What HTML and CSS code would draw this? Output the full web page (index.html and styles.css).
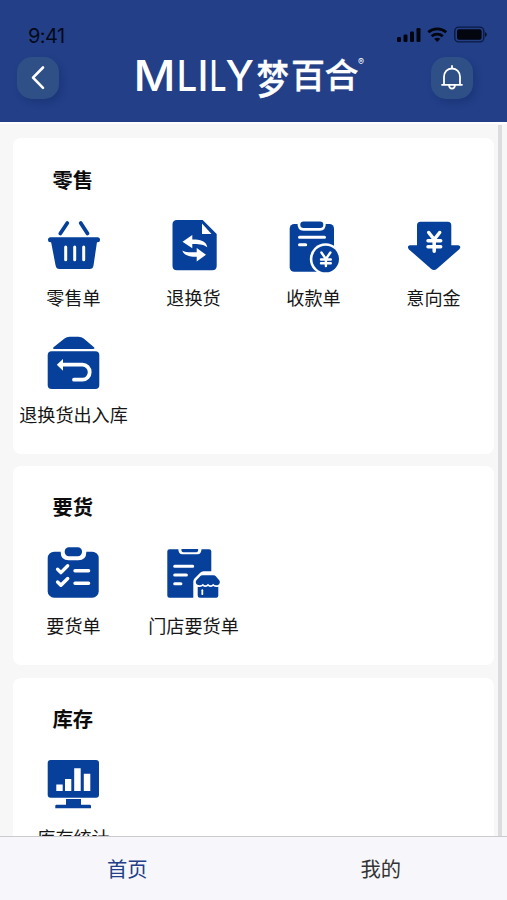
FILE: index.html
```html
<!DOCTYPE html>
<html lang="zh-CN">
<head>
<meta charset="utf-8">
<meta name="viewport" content="width=device-width, initial-scale=1">
<title>MLILY 梦百合</title>
<link rel="stylesheet" href="styles.css">
</head>
<body>
<div class="app">
  <header class="header">
    <div class="status">
      <span class="time">9:41</span>
      <svg class="status-icons" width="92" height="18" viewBox="0 0 92 18">
        <rect x="0" y="11" width="4" height="5" rx="1.200"/>
        <rect x="6.500" y="8.500" width="4" height="7.500" rx="1.200"/>
        <rect x="13" y="5.500" width="4" height="10.500" rx="1.200"/>
        <rect x="19.500" y="2" width="4" height="14" rx="1.200"/>
        <g class="wifi"><path d="M31.300 6.200a13.500 13.500 0 0 1 17.900 0"/><path d="M34.700 10.200a8.300 8.300 0 0 1 11.100 0"/></g>
        <path d="M37.100 12.800q3.200-2.200 6.300 0L40.250 16z"/>
        <rect class="battery" x="57.800" y="1.100" width="29" height="14.800" rx="4"/>
        <rect x="60" y="3.300" width="24.600" height="10.400" rx="2"/>
        <path d="M88.200 5.900q3 2.500 0 5.200z"/>
      </svg>
    </div>
    <div class="brand-row">
      <button class="round-btn" aria-label="返回">
        <svg width="42" height="42" viewBox="0 0 42 42"><path class="chevron" d="M26 10.500 16 20.700l10 10.200"/></svg>
      </button>
      <svg class="logo" width="236" height="60" viewBox="0 0 236 60">
        <g class="latin">
          <text x="6.500" y="42.500" textLength="42" lengthAdjust="spacingAndGlyphs">M</text>
          <text x="49.800" y="42.500" textLength="20.500" lengthAdjust="spacingAndGlyphs">L</text>
          <text x="70.500" y="42.500" textLength="11" lengthAdjust="spacingAndGlyphs">I</text>
          <text x="82.500" y="42.500" textLength="17" lengthAdjust="spacingAndGlyphs">L</text>
          <text x="98.500" y="42.500" textLength="28.500" lengthAdjust="spacingAndGlyphs">Y</text>
        </g>
        <g class="hanzi">
          <text transform="translate(129.500 45.500) scale(.95 1.180)">梦</text>
          <text x="164" y="40">百</text>
          <text x="197.500" y="40">合</text>
        </g>
        <text class="reg" x="231" y="17">®</text>
      </svg>
      <button class="round-btn" aria-label="通知">
        <svg width="42" height="42" viewBox="0 0 42 42"><path class="bell" d="M21 9v2.200M13 27.500v-7.700c0-5 3.300-8.300 8-8.300s8 3.300 8 8.300v7.700M11 27.800h20M18 28c.3 4.800 5.700 4.800 6 0"/></svg>
      </button>
    </div>
  </header>

  <main class="content">
    <div class="cards">
      <section class="card">
        <h2>零售</h2>
        <div class="grid">
          <div class="item">
            <svg class="icon" viewBox="0 0 60 56">
              <path class="ln" stroke-width="3.800" d="M24.300 5 17.300 15.500M37.700 5l6.800 10.500"/>
              <rect x="5" y="19.300" width="52" height="5" rx="2.500"/>
              <path d="M7.700 22h46.600L50.500 47.500Q50 51 46.500 51H16.500Q13.200 51 12.600 47.500z"/>
              <path class="wl" stroke-width="3" d="M22.700 29v12.700M31.700 29v12.700M40.700 29v12.700"/>
            </svg>
            <span>零售单</span>
          </div>
          <div class="item">
            <svg class="icon" viewBox="0 0 60 56">
              <path d="M14 2H39.700l14 14v31.800q0 4.500-4.500 4.500H14Q9.500 52.300 9.500 47.800V6.500Q9.500 2 14 2z"/>
              <path class="w" d="M39 5.500V16h9.500zM19.500 23.700l9.800-6.700v4.500c8 .2 13.800 1.200 15 7.700-4.500-3.200-9.500-3.200-15-3.200v4.300zM43 36.700l-9.300-6.700v4.200c-5 0-10 .8-14.400-1.700 1.500 5 7 6.300 14.400 6.300v4.700z"/>
            </svg>
            <span>退换货</span>
          </div>
          <div class="item">
            <svg class="icon" viewBox="0 0 60 56">
              <rect x="6.700" y="6" width="44.300" height="47.700" rx="4.500"/>
              <path class="w" d="M14.500 5h28.300q.3 7.700-6 7.700H20.500q-6.300 0-6-7.700z"/>
              <rect x="17.300" y="3.500" width="23" height="6.500" rx="3.200"/>
              <path class="wl" stroke-width="3" d="M16.500 19.300h25M16.500 26.700h6.200"/>
              <circle class="w" cx="42.500" cy="41" r="15.700"/>
              <circle cx="42.700" cy="41" r="13.300"/>
              <path class="wl" stroke-width="2.400" d="m38.400 34.500 4.500 6.500 4.500-6.500M42.900 41v7M38 41.500h9.800M38 45.300h9.800"/>
            </svg>
            <span>收款单</span>
          </div>
          <div class="item">
            <svg class="icon" viewBox="0 0 60 56">
              <path d="M17.500 3.700h27.300q3.500 0 3.500 3.500v20h7q3.500 1 1 4L34 50.700q-3 2.700-6 0L5.700 31.200q-2-3 1-4H14v-20q0-3.500 3.500-3.500z"/>
              <path class="wl" stroke-width="3.500" d="m25.700 14.500 5.500 7 5.500-7M31.200 21.500v11.700M25 22.700h12.700M25 28.700h12.700"/>
            </svg>
            <span>意向金</span>
          </div>
          <div class="item">
            <svg class="icon" viewBox="0 0 60 56">
              <path d="M10.500 12.300 21.500 3.500q2.200-1.800 5-1.800h9q3 0 5.200 1.800l10.300 8.800q1.300 1.700-1 1.700H11.500q-2.300 0-1-1.700z"/>
              <rect x="4.700" y="16.300" width="51.600" height="37.700" rx="4"/>
              <path class="w" d="M13.800 29.700 20 24v11.700z"/>
              <path class="wl" stroke-width="3.800" d="M19 29.700h20.500a7.200 7.500 0 0 1 0 15H31"/>
            </svg>
            <span>退换货出入库</span>
          </div>
        </div>
      </section>

      <section class="card">
        <h2>要货</h2>
        <div class="grid">
          <div class="item">
            <svg class="icon" viewBox="0 0 60 56">
              <rect x="4.700" y="5.700" width="51" height="46" rx="6.500"/>
              <path class="w" d="M17.700 5h25.600v1.300q0 8-8 8H25.700q-8 0-8-8z"/>
              <rect x="21.700" y="1.300" width="17.300" height="8.900" rx="4.200"/>
              <path class="wl" stroke-width="3.400" d="m14.600 23.300 3.300 3.300 6.800-6.800M14.600 36l3.300 3.300 6.800-6.800M32 24.700h13.600M32 37.300h13.600"/>
            </svg>
            <span>要货单</span>
          </div>
          <div class="item">
            <svg class="icon" viewBox="0 0 60 56">
              <path d="M6.500 3.300h8.800q.2 5 4 5h15.200q3.800 0 4-5h7.500q2.300 0 2.300 2.300v19.700H40.500q-2 0-3.300 1.500l-5.700 5.700q-1.200 1.300-1.200 3v16.200H6.500q-2.200 0-2.200-2.200V5.500q0-2.200 2.200-2.200z"/>
              <path d="M18.500 3h16.600v1.500q0 1.800-1.800 1.800h-13q-1.800 0-1.800-1.800z"/>
              <path class="wl" stroke-width="3" d="M11.700 20.300h18M11.700 29h11.700M11.700 37.700h6.200"/>
              <path d="M39.500 29.300h11q1.500 0 2.300 1l3.600 4.200c1.200 2-.1 5.200-3.200 4.800q-2 0-3-1.500-2.500 3-5.200 0-2.600 3-5.200 0-1 1.500-3 1.500c-3.200.3-4.700-2.500-3.600-4.700l4-4.300q.7-1 2.300-1z"/>
              <path d="M34.700 40.800q2.700.7 5-.7 2.600 1.800 5.300 0 2.600 1.800 5.200 0 2.400 1.400 5.100.7v8.700q0 2.200-2.200 2.200H36.900q-2.200 0-2.200-2.200z"/>
              <path class="wl" stroke-width="1.800" d="M39.300 44.200v4"/>
            </svg>
            <span>门店要货单</span>
          </div>
        </div>
      </section>

      <section class="card">
        <h2>库存</h2>
        <div class="grid">
          <div class="item">
            <svg class="icon" viewBox="0 0 60 56">
              <rect x="4.700" y="2" width="51.300" height="37.700" rx="3"/>
              <path d="M23 41h15v5.700h8.800q1.200 0 1.200 1.200v2.400H12.300v-2.400q0-1.200 1.200-1.200H23z"/>
              <path class="w" d="M13.300 26.500h6.400V33h-6.400zM22 21h6.300v12H22zM31.200 10.300h6.500V33h-6.500zM40.800 15.700h6.500V33h-6.500z"/>
            </svg>
            <span>库存统计</span>
          </div>
        </div>
      </section>
    </div>
    <div class="scrollbar"></div>
  </main>

  <nav class="tabs">
    <a class="tab active">首页</a>
    <a class="tab">我的</a>
  </nav>
</div>
</body>
</html>
```
FILE: styles.css
```css
* {
  box-sizing: border-box;
}

body {
  margin: 0;
  font-family: "Noto Sans CJK SC", sans-serif;
  color: #161616;
}

.app {
  display: flex;
  flex-direction: column;
  height: 900px;
  overflow: hidden;
  background: #f7f7f7;
}

.header {
  flex: none;
  height: 124px;
  background: #223f88;
  border-bottom: 2px solid #fff;
}

.status {
  display: flex;
  justify-content: space-between;
  align-items: center;
  height: 48px;
  padding: 24px 18px 0 28px;
}

.time {
  font: 400 20px/24px Inter, sans-serif;
  letter-spacing: -0.6px;
  color: #050a18;
}

.status-icons {
  margin-top: -2px;
  fill: #03060f;
}

.wifi {
  fill: none;
  stroke: #03060f;
  stroke-width: 2.800;
}

.battery {
  fill: none;
  stroke: #0b1a40;
  stroke-width: 1.400;
}

.brand-row {
  display: flex;
  justify-content: space-between;
  align-items: center;
  padding: 0 34px 0 17px;
}

.round-btn {
  width: 42px;
  height: 42px;
  padding: 0;
  border: 0;
  border-radius: 15px;
  background: #2f5087;
  box-shadow: 3px 4px 6px rgba(15, 35, 90, 0.3);
}

.round-btn svg {
  display: block;
}

.chevron,
.bell {
  fill: none;
  stroke: #fff;
  stroke-width: 2.600;
  stroke-linecap: round;
  stroke-linejoin: round;
}

.bell {
  stroke-width: 1.800;
}

.logo {
  display: block;
  overflow: visible;
  fill: #fff;
}

.latin {
  font: 500 43px Inter, sans-serif;
}

.hanzi {
  font: 500 34px "Noto Sans CJK SC", sans-serif;
  stroke: #fff;
  stroke-width: 0.300;
}

.reg {
  font: 400 9px Inter, sans-serif;
}

.content {
  flex: 1;
  min-height: 0;
  display: flex;
  justify-content: space-between;
  overflow: hidden;
  padding: 0 5px 0 13px;
}

.cards {
  width: 481px;
  padding-top: 14px;
}

.card {
  height: 199px;
  margin-bottom: 12.500px;
  padding-top: 25px;
  border-radius: 8px;
  background: #fff;
}

.card:first-child {
  height: 316px;
  margin-bottom: 12px;
  padding-top: 26px;
}

.card h2 {
  margin: 0 0 25px 39.500px;
  font-size: 20.300px;
  line-height: 30px;
  font-weight: 700;
  color: #0c0c0c;
}

.card:first-child h2 {
  margin-bottom: 24px;
}

.grid {
  display: grid;
  grid-template-columns: repeat(4, 120px);
  grid-auto-rows: 117px;
}

.item {
  display: flex;
  flex-direction: column;
  align-items: center;
  font-size: 18.100px;
  line-height: 24px;
  white-space: nowrap;
}

.item span {
  padding-left: 1px;
}

.icon {
  width: 60px;
  height: 56px;
  margin-bottom: 11px;
  fill: #06409a;
}

.w {
  fill: #fff;
}

.ln,
.wl {
  fill: none;
  stroke: #06409a;
  stroke-linecap: round;
  stroke-linejoin: round;
}

.wl {
  stroke: #fff;
}

.scrollbar {
  width: 4px;
  margin-top: 1px;
  background: #dcdcde;
}

.tabs {
  flex: none;
  display: flex;
  height: 64px;
  border-top: 1px solid #cbcbcf;
  background: #f7f7fb;
}

.tab {
  flex: 1;
  padding-left: 1px;
  text-align: center;
  font-size: 20.300px;
  line-height: 62px;
  color: #333;
}

.tab.active {
  color: #223f88;
}
```
